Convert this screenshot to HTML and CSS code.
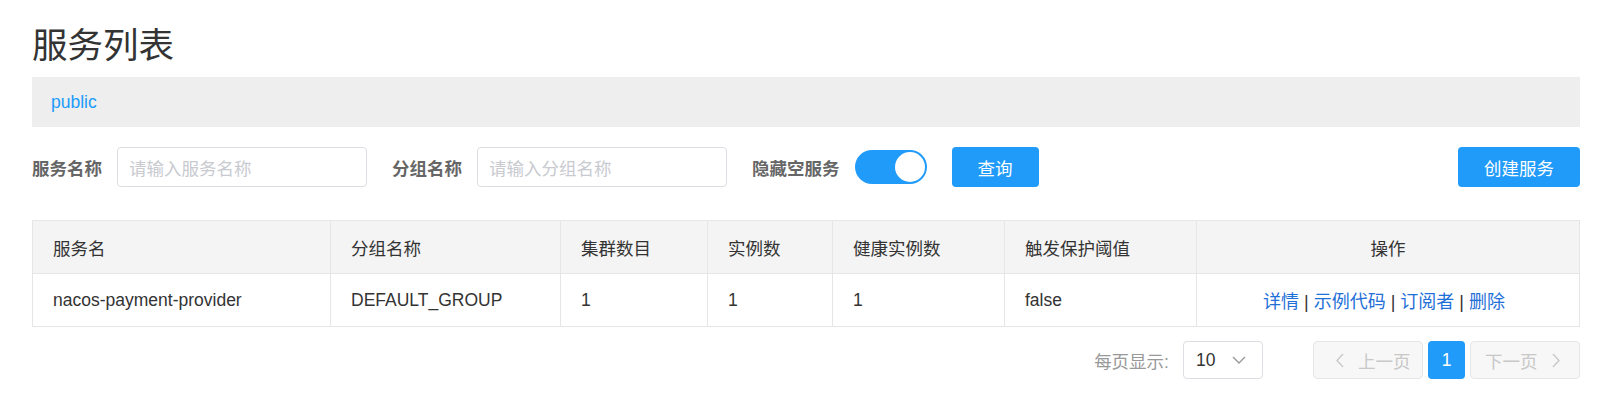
FILE: index.html
```html
<!DOCTYPE html>
<html lang="zh-CN">
<head>
<meta charset="utf-8">
<title>服务列表</title>
<link rel="stylesheet" href="styles.css">
</head>
<body>
<div class="page">
  <h1 class="page-title">服务列表</h1>
  <div class="ns-bar"><span class="ns-item">public</span></div>

  <div class="filters">
    <div class="filter-item">
      <label class="filter-label">服务名称</label>
      <div class="input"><span class="placeholder">请输入服务名称</span></div>
    </div>
    <div class="filter-item">
      <label class="filter-label">分组名称</label>
      <div class="input"><span class="placeholder">请输入分组名称</span></div>
    </div>
    <div class="filter-item">
      <label class="filter-label">隐藏空服务</label>
      <div class="switch"><span class="knob"></span></div>
    </div>
    <button class="btn">查询</button>
    <div class="spacer"></div>
    <button class="btn btn-create">创建服务</button>
  </div>

  <table class="table">
    <colgroup>
      <col class="c1"><col class="c2"><col class="c3"><col class="c4"><col class="c5"><col class="c6"><col class="c7">
    </colgroup>
    <thead>
      <tr>
        <th>服务名</th>
        <th>分组名称</th>
        <th>集群数目</th>
        <th>实例数</th>
        <th>健康实例数</th>
        <th>触发保护阈值</th>
        <th class="center">操作</th>
      </tr>
    </thead>
    <tbody>
      <tr>
        <td>nacos-payment-provider</td>
        <td>DEFAULT_GROUP</td>
        <td>1</td>
        <td>1</td>
        <td>1</td>
        <td>false</td>
        <td class="center actions"><a class="link">详情</a><span class="sep"> | </span><a class="link">示例代码</a><span class="sep"> | </span><a class="link">订阅者</a><span class="sep"> | </span><a class="link">删除</a></td>
      </tr>
    </tbody>
  </table>

  <div class="pagination">
    <span class="page-size-label">每页显示:</span>
    <div class="select"><span class="select-value">10</span>
      <svg class="chev-down" width="14" height="8" viewBox="0 0 14 8"><path d="M1 1 L7 7 L13 1" fill="none" stroke="#999" stroke-width="1.4"/></svg>
    </div>
    <div class="pages">
      <button class="pg-btn pg-disabled pg-prev">
        <svg width="8" height="15" viewBox="0 0 8 15"><path d="M7 1 L1 7.5 L7 14" fill="none" stroke="#c8c8c8" stroke-width="1.4"/></svg>
        <span>上一页</span>
      </button>
      <button class="pg-btn pg-current">1</button>
      <button class="pg-btn pg-disabled pg-next">
        <span>下一页</span>
        <svg width="8" height="15" viewBox="0 0 8 15"><path d="M1 1 L7 7.5 L1 14" fill="none" stroke="#c8c8c8" stroke-width="1.4"/></svg>
      </button>
    </div>
  </div>
</div>
</body>
</html>
```

FILE: styles.css
```css
* { box-sizing: border-box; }
html, body { margin: 0; padding: 0; background: #fff; }
body {
  font-family: "Liberation Sans", "Noto Sans CJK SC", sans-serif;
  font-size: 17.5px;
  color: #333;
}
.page { padding: 0 32px; }

.page-title {
  margin: 0 0 6px 0;
  padding-top: 21px;
  font-size: 35.5px;
  line-height: 50px;
  font-weight: normal;
  color: #333;
}

.ns-bar {
  height: 50px;
  background: #eeeeee;
  padding-left: 19px;
  display: flex;
  align-items: center;
}
.ns-item { color: #209bfa; font-size: 17.5px; }

.filters {
  margin-top: 20px;
  height: 40px;
  display: flex;
  align-items: center;
}
.filter-item {
  display: flex;
  align-items: center;
  margin-right: 25px;
}
.filter-label {
  font-weight: bold;
  color: #666;
  font-size: 17.5px;
  margin-right: 15px;
}
.input {
  width: 250px;
  height: 40px;
  border: 1px solid #dcdee3;
  border-radius: 4px;
  padding: 0 11px;
  display: flex;
  align-items: center;
}
.placeholder { color: #c8cad0; }

.switch {
  width: 72px;
  height: 34px;
  border-radius: 17px;
  background: #209bfa;
  display: flex;
  align-items: center;
  justify-content: flex-end;
  padding-right: 2px;
}
.knob {
  width: 30px;
  height: 30px;
  border-radius: 50%;
  background: #fff;
}

.btn {
  height: 40px;
  border: none;
  border-radius: 4px;
  background: #209bfa;
  color: #fff;
  font-family: inherit;
  font-size: 17.5px;
  padding: 0;
  width: 87px;
}
.btn-create { width: 122px; }
.spacer { flex: 1; }

.table {
  margin-top: 33px;
  width: 100%;
  border-collapse: collapse;
  table-layout: fixed;
  border: 1px solid #e6e6e6;
}
.c1 { width: 298px; }
.c2 { width: 230px; }
.c3 { width: 147px; }
.c4 { width: 125px; }
.c5 { width: 172px; }
.c6 { width: 192px; }
.c7 { width: auto; }
.table th, .table td {
  border: 1px solid #e6e6e6;
  height: 53px;
  padding: 0 20px;
  text-align: left;
  font-weight: normal;
  color: #333;
  white-space: nowrap;
}
.table th { background: #f4f4f4; }
.table .center { text-align: center; }
.table .actions { font-size: 18px; padding-right: 28px; }
.link { color: #1f70d8; cursor: pointer; }
.sep { color: #333; }

.pagination {
  margin-top: 14px;
  display: flex;
  justify-content: flex-end;
  align-items: center;
  height: 38px;
}
.page-size-label { color: #999; margin-right: 14px; }
.select {
  width: 80px;
  height: 38px;
  border: 1px solid #dcdee3;
  border-radius: 4px;
  display: flex;
  align-items: center;
  justify-content: space-between;
  padding: 0 16px 0 12px;
  color: #333;
}
.pages { display: flex; margin-left: 50px; gap: 5px; }
.pg-btn {
  height: 38px;
  border-radius: 4px;
  font-family: inherit;
  font-size: 17.5px;
  display: flex;
  align-items: center;
  justify-content: flex-start;
  gap: 14px;
  padding: 0;
}
.pg-disabled {
  width: 110px;
  background: #f7f7f7;
  border: 1px solid #e6e6e6;
  color: #c8c8c8;
}
.pg-prev { padding-left: 22px; }
.pg-next { padding-left: 14px; }
.pg-current {
  width: 37px;
  background: #209bfa;
  border: none;
  color: #fff;
  justify-content: center;
}
```
